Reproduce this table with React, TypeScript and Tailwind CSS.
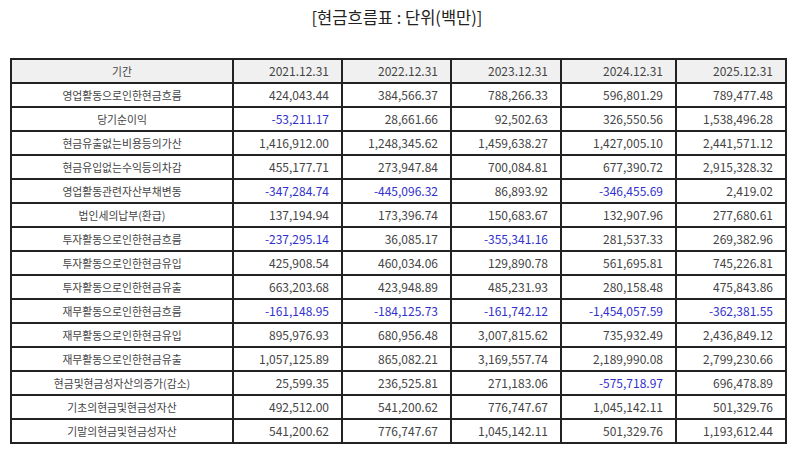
const years = ["2021.12.31", "2022.12.31", "2023.12.31", "2024.12.31", "2025.12.31"];

const rows: [string, string[]][] = [
  ["영업활동으로인한현금흐름", ["424,043.44", "384,566.37", "788,266.33", "596,801.29", "789,477.48"]],
  ["당기순이익", ["-53,211.17", "28,661.66", "92,502.63", "326,550.56", "1,538,496.28"]],
  ["현금유출없는비용등의가산", ["1,416,912.00", "1,248,345.62", "1,459,638.27", "1,427,005.10", "2,441,571.12"]],
  ["현금유입없는수익등의차감", ["455,177.71", "273,947.84", "700,084.81", "677,390.72", "2,915,328.32"]],
  ["영업활동관련자산부채변동", ["-347,284.74", "-445,096.32", "86,893.92", "-346,455.69", "2,419.02"]],
  ["법인세의납부(환급)", ["137,194.94", "173,396.74", "150,683.67", "132,907.96", "277,680.61"]],
  ["투자활동으로인한현금흐름", ["-237,295.14", "36,085.17", "-355,341.16", "281,537.33", "269,382.96"]],
  ["투자활동으로인한현금유입", ["425,908.54", "460,034.06", "129,890.78", "561,695.81", "745,226.81"]],
  ["투자활동으로인한현금유출", ["663,203.68", "423,948.89", "485,231.93", "280,158.48", "475,843.86"]],
  ["재무활동으로인한현금흐름", ["-161,148.95", "-184,125.73", "-161,742.12", "-1,454,057.59", "-362,381.55"]],
  ["재무활동으로인한현금유입", ["895,976.93", "680,956.48", "3,007,815.62", "735,932.49", "2,436,849.12"]],
  ["재무활동으로인한현금유출", ["1,057,125.89", "865,082.21", "3,169,557.74", "2,189,990.08", "2,799,230.66"]],
  ["현금및현금성자산의증가(감소)", ["25,599.35", "236,525.81", "271,183.06", "-575,718.97", "696,478.89"]],
  ["기초의현금및현금성자산", ["492,512.00", "541,200.62", "776,747.67", "1,045,142.11", "501,329.76"]],
  ["기말의현금및현금성자산", ["541,200.62", "776,747.67", "1,045,142.11", "501,329.76", "1,193,612.44"]],
];

const font = { fontFamily: '"Noto Sans CJK KR", "Noto Sans", sans-serif' };

const App = () => {
  return (
    <div className="w-[794px] h-[452px] bg-white text-[#444]" style={font}>
      <div className="pt-[6px] h-[28px] text-center text-[16.5px] leading-[22px] text-[#222]">
        [현금흐름표 : 단위(백만)]
      </div>
      <table className="mt-[30px] ml-[10px] w-[775px] table-fixed border-collapse">
        <colgroup>
          <col className="w-[222px]" />
          <col className="w-[109px]" />
          <col className="w-[109px]" />
          <col className="w-[110px]" />
          <col className="w-[115px]" />
          <col className="w-[110px]" />
        </colgroup>
        <thead>
          <tr className="h-[24px] bg-[#f0f0f0]">
            <th className="border-2 border-[#222] text-[10.8px] font-normal text-center p-0">기간</th>
            {years.map((y) => (
              <th key={y} className="border-2 border-[#222] text-[12px] font-normal text-right pr-[12px] p-0">
                {y}
              </th>
            ))}
          </tr>
        </thead>
        <tbody>
          {rows.map(([label, values]) => (
            <tr key={label} className="h-[24px]">
              <td className="border-2 border-[#222] text-[10.8px] text-center p-0">{label}</td>
              {values.map((v, i) => (
                <td
                  key={i}
                  className={`border-2 border-[#222] text-[12px] text-right pr-[12px] p-0 ${
                    v.startsWith("-") ? "text-[#3030cc]" : ""
                  }`}
                >
                  {v}
                </td>
              ))}
            </tr>
          ))}
        </tbody>
      </table>
    </div>
  );
};

export default App;
